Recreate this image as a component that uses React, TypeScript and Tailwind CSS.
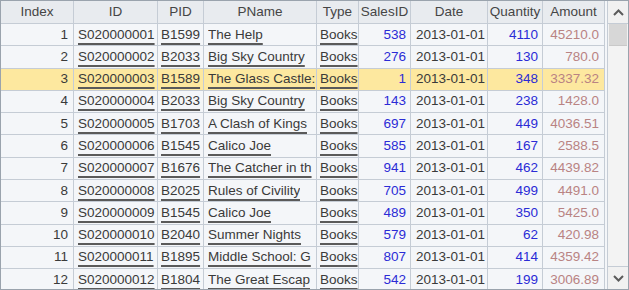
import React from "react";

type Row = [number, string, string, string, string, number, string, number, string];

const rows: Row[] = [
  [1, "S020000001", "B1599", "The Help", "Books", 538, "2013-01-01", 4110, "45210.0"],
  [2, "S020000002", "B2033", "Big Sky Country", "Books", 276, "2013-01-01", 130, "780.0"],
  [3, "S020000003", "B1589", "The Glass Castle:", "Books", 1, "2013-01-01", 348, "3337.32"],
  [4, "S020000004", "B2033", "Big Sky Country", "Books", 143, "2013-01-01", 238, "1428.0"],
  [5, "S020000005", "B1703", "A Clash of Kings", "Books", 697, "2013-01-01", 449, "4036.51"],
  [6, "S020000006", "B1545", "Calico Joe", "Books", 585, "2013-01-01", 167, "2588.5"],
  [7, "S020000007", "B1676", "The Catcher in th", "Books", 941, "2013-01-01", 462, "4439.82"],
  [8, "S020000008", "B2025", "Rules of Civility", "Books", 705, "2013-01-01", 499, "4491.0"],
  [9, "S020000009", "B1545", "Calico Joe", "Books", 489, "2013-01-01", 350, "5425.0"],
  [10, "S020000010", "B2040", "Summer Nights", "Books", 579, "2013-01-01", 62, "420.98"],
  [11, "S020000011", "B1895", "Middle School: G", "Books", 807, "2013-01-01", 414, "4359.42"],
  [12, "S020000012", "B1804", "The Great Escap", "Books", 542, "2013-01-01", 199, "3006.89"],
];

const headers = ["Index", "ID", "PID", "PName", "Type", "SalesID", "Date", "Quantity", "Amount"];
const widths = ["w-[73px]", "w-[84px]", "w-[46px]", "w-[113px]", "w-[42px]", "w-[52px]", "w-[77px]", "w-[55px]", "w-[62px]"];

const cellBase = "shrink-0 h-full border-r border-[#c5ccd5] flex items-center overflow-hidden whitespace-nowrap";
const link = "underline decoration-[#5a5a5a] decoration-[1.5px] underline-offset-[4px]";

function Chevron({ up }: { up: boolean }) {
  return (
    <svg width="11" height="7" viewBox="0 0 11 7">
      <path
        d={up ? "M1 6 L5.5 1.5 L10 6" : "M1 1 L5.5 5.5 L10 1"}
        fill="none"
        stroke="#5b5b5b"
        strokeWidth="2"
      />
    </svg>
  );
}

export default function App() {
  return (
    <div
      className="w-[629px] h-[290px] overflow-hidden border border-[#9aa3ad] bg-[#f4f6f9] flex text-[13.5px] text-[#3a3a3a]"
      style={{ fontFamily: '"Liberation Sans", Arial, sans-serif' }}
    >
      <div className="w-[604px] shrink-0 flex flex-col">
        <div className="h-[23px] shrink-0 flex bg-[#e8ebef] border-b border-[#c5ccd5]">
          {headers.map((h, i) => (
            <div key={h} className={`${cellBase} ${widths[i]} justify-center text-[#454545]`}>
              {h}
            </div>
          ))}
        </div>
        {rows.map((r) => {
          const hl = r[0] === 3;
          return (
            <div
              key={r[0]}
              className={`h-[22.3px] shrink-0 flex border-b border-[#c5ccd5] ${hl ? "bg-[#fde89f]" : ""}`}
            >
              <div className={`${cellBase} ${widths[0]} justify-end pr-[5px]`}>{r[0]}</div>
              <div className={`${cellBase} ${widths[1]} pl-[4px]`}>
                <span className={link}>{r[1]}</span>
              </div>
              <div className={`${cellBase} ${widths[2]} pl-[3px]`}>
                <span className={link}>{r[2]}</span>
              </div>
              <div className={`${cellBase} ${widths[3]} pl-[4px]`}>
                <span className={`${link} min-w-0 overflow-hidden`}>{r[3]}</span>
              </div>
              <div className={`${cellBase} ${widths[4]} pl-[3px]`}>
                <span className={link}>{r[4]}</span>
              </div>
              <div className={`${cellBase} ${widths[5]} justify-end pr-[4px] text-[#2b2bd6]`}>{r[5]}</div>
              <div className={`${cellBase} ${widths[6]} pl-[5px]`}>{r[6]}</div>
              <div className={`${cellBase} ${widths[7]} justify-end pr-[4px] text-[#2b2bd6]`}>{r[7]}</div>
              <div className={`${cellBase} ${widths[8]} justify-end pr-[5px] text-[#b98383]`}>{r[8]}</div>
            </div>
          );
        })}
      </div>
      <div className="w-[2px] shrink-0 bg-[#f4f6f9]" />
      <div className="flex-1 flex flex-col border-l border-[#c5ccd5] bg-[#f3f3f3]">
        <div className="h-[23px] shrink-0 flex items-center justify-center border-b border-[#c5ccd5] bg-[#f1f1f1]">
          <Chevron up />
        </div>
        <div className="h-[22px] shrink-0 mx-[1px] bg-[#d7d7d7] border-b border-[#c9c9c9]" />
        <div className="flex-1" />
        <div className="h-[23px] shrink-0 flex items-center justify-center border-t border-[#c5ccd5] bg-[#f1f1f1]">
          <Chevron up={false} />
        </div>
      </div>
    </div>
  );
}
